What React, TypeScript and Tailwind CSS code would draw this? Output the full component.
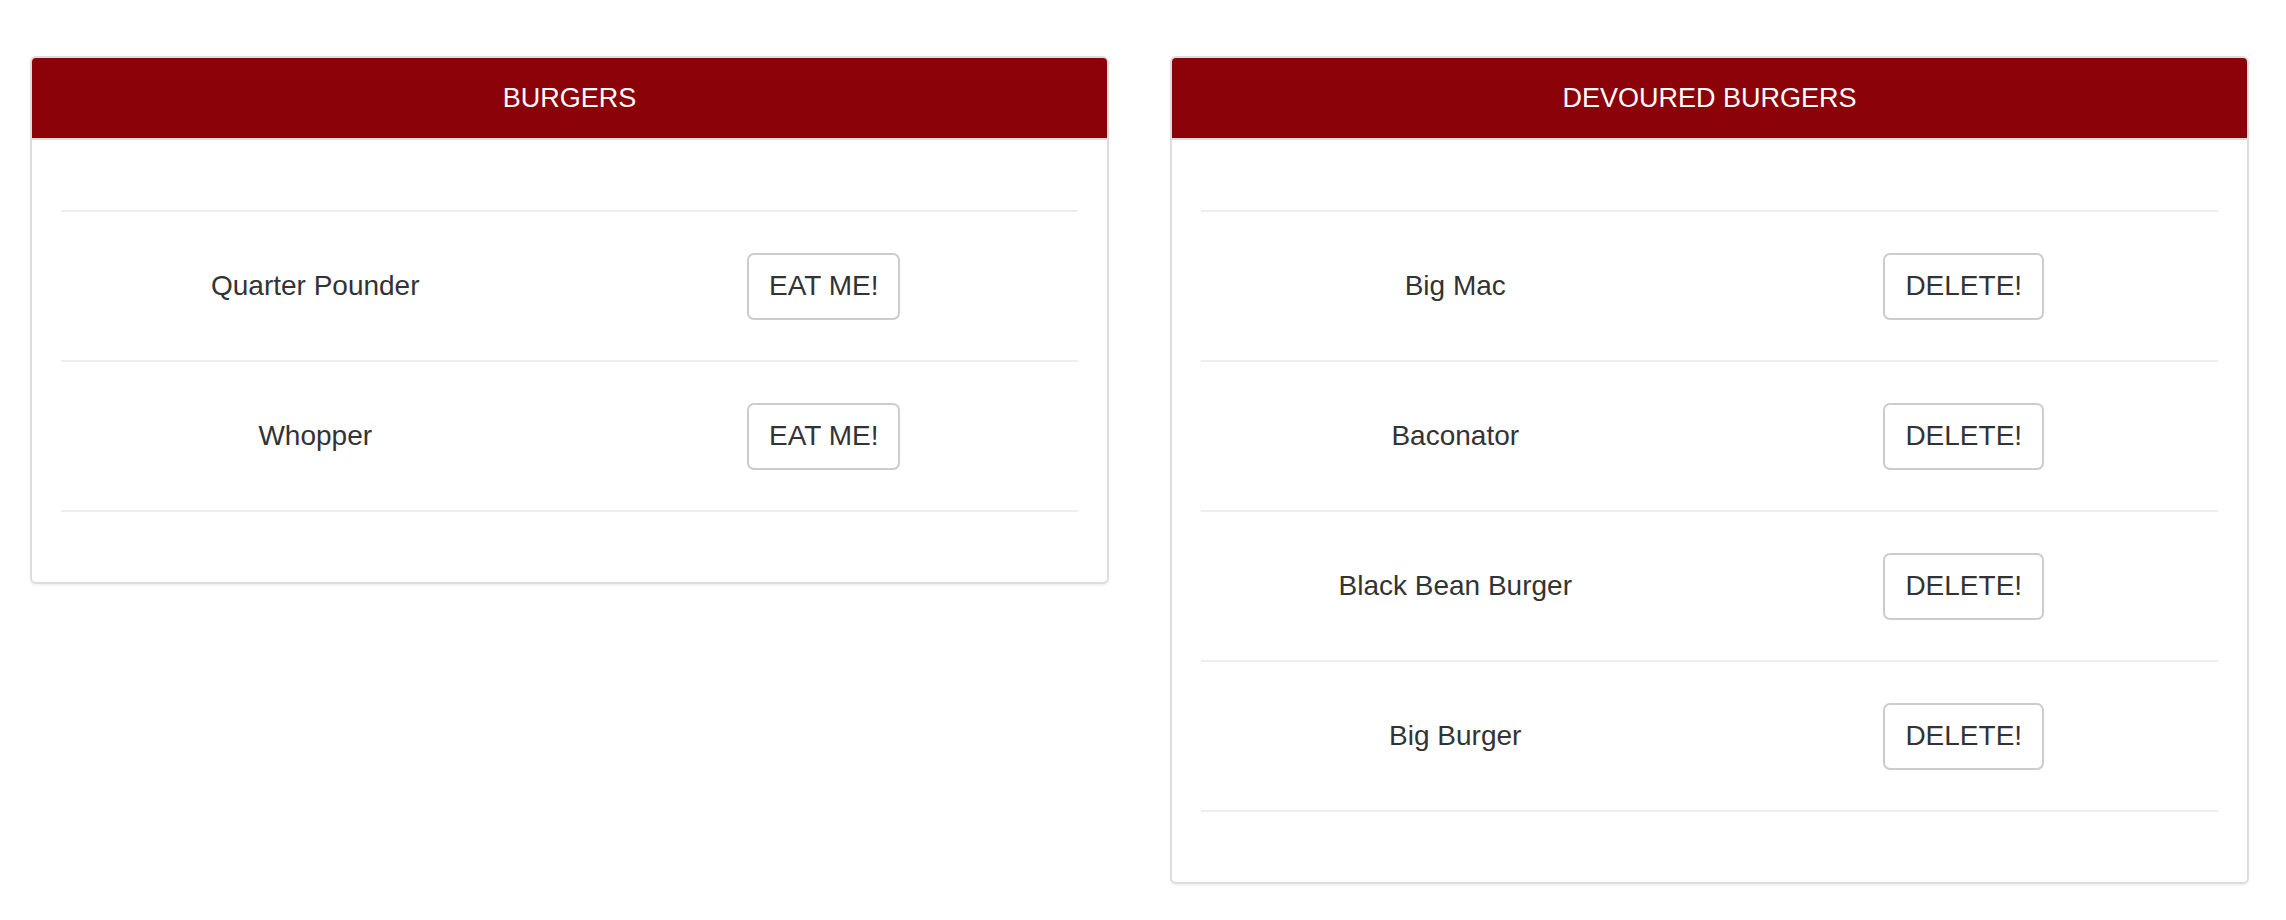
const burgers = ['Quarter Pounder', 'Whopper'];
const devoured = ['Big Mac', 'Baconator', 'Black Bean Burger', 'Big Burger'];

function Panel({ title, items, action }: { title: string; items: string[]; action: string }) {
  return (
    <div className="w-[1079px] border-2 border-[#dddddd] rounded-[6px] bg-white shadow-[0_2px_2px_rgba(0,0,0,0.05)] overflow-hidden">
      <div className="h-[82px] bg-[#8b0209] border-b-2 border-[#dddddd] flex items-center justify-center text-white text-[27px]">
        {title}
      </div>
      <div className="px-[29px] pt-[70px] pb-[70px]">
        {items.map((name) => (
          <div key={name} className="grid grid-cols-2 items-center h-[150px] border-t-2 border-[#eeeeee]">
            <span className="text-center">{name}</span>
            <div className="flex justify-center">
              <button className="h-[67px] px-[20px] border-2 border-[#cccccc] rounded-[7px] bg-white text-[#333333] text-[28px]">
                {action}
              </button>
            </div>
          </div>
        ))}
        <div className="border-t-2 border-[#eeeeee]" />
      </div>
    </div>
  );
}

export default function App() {
  return (
    <div className="min-h-screen bg-white text-[#333333] text-[28px] font-['Liberation_Sans',Arial,sans-serif] flex items-start gap-[61px] pl-[30px] pt-[56px]">
      <Panel title="BURGERS" items={burgers} action="EAT ME!" />
      <Panel title="DEVOURED BURGERS" items={devoured} action="DELETE!" />
    </div>
  );
}
